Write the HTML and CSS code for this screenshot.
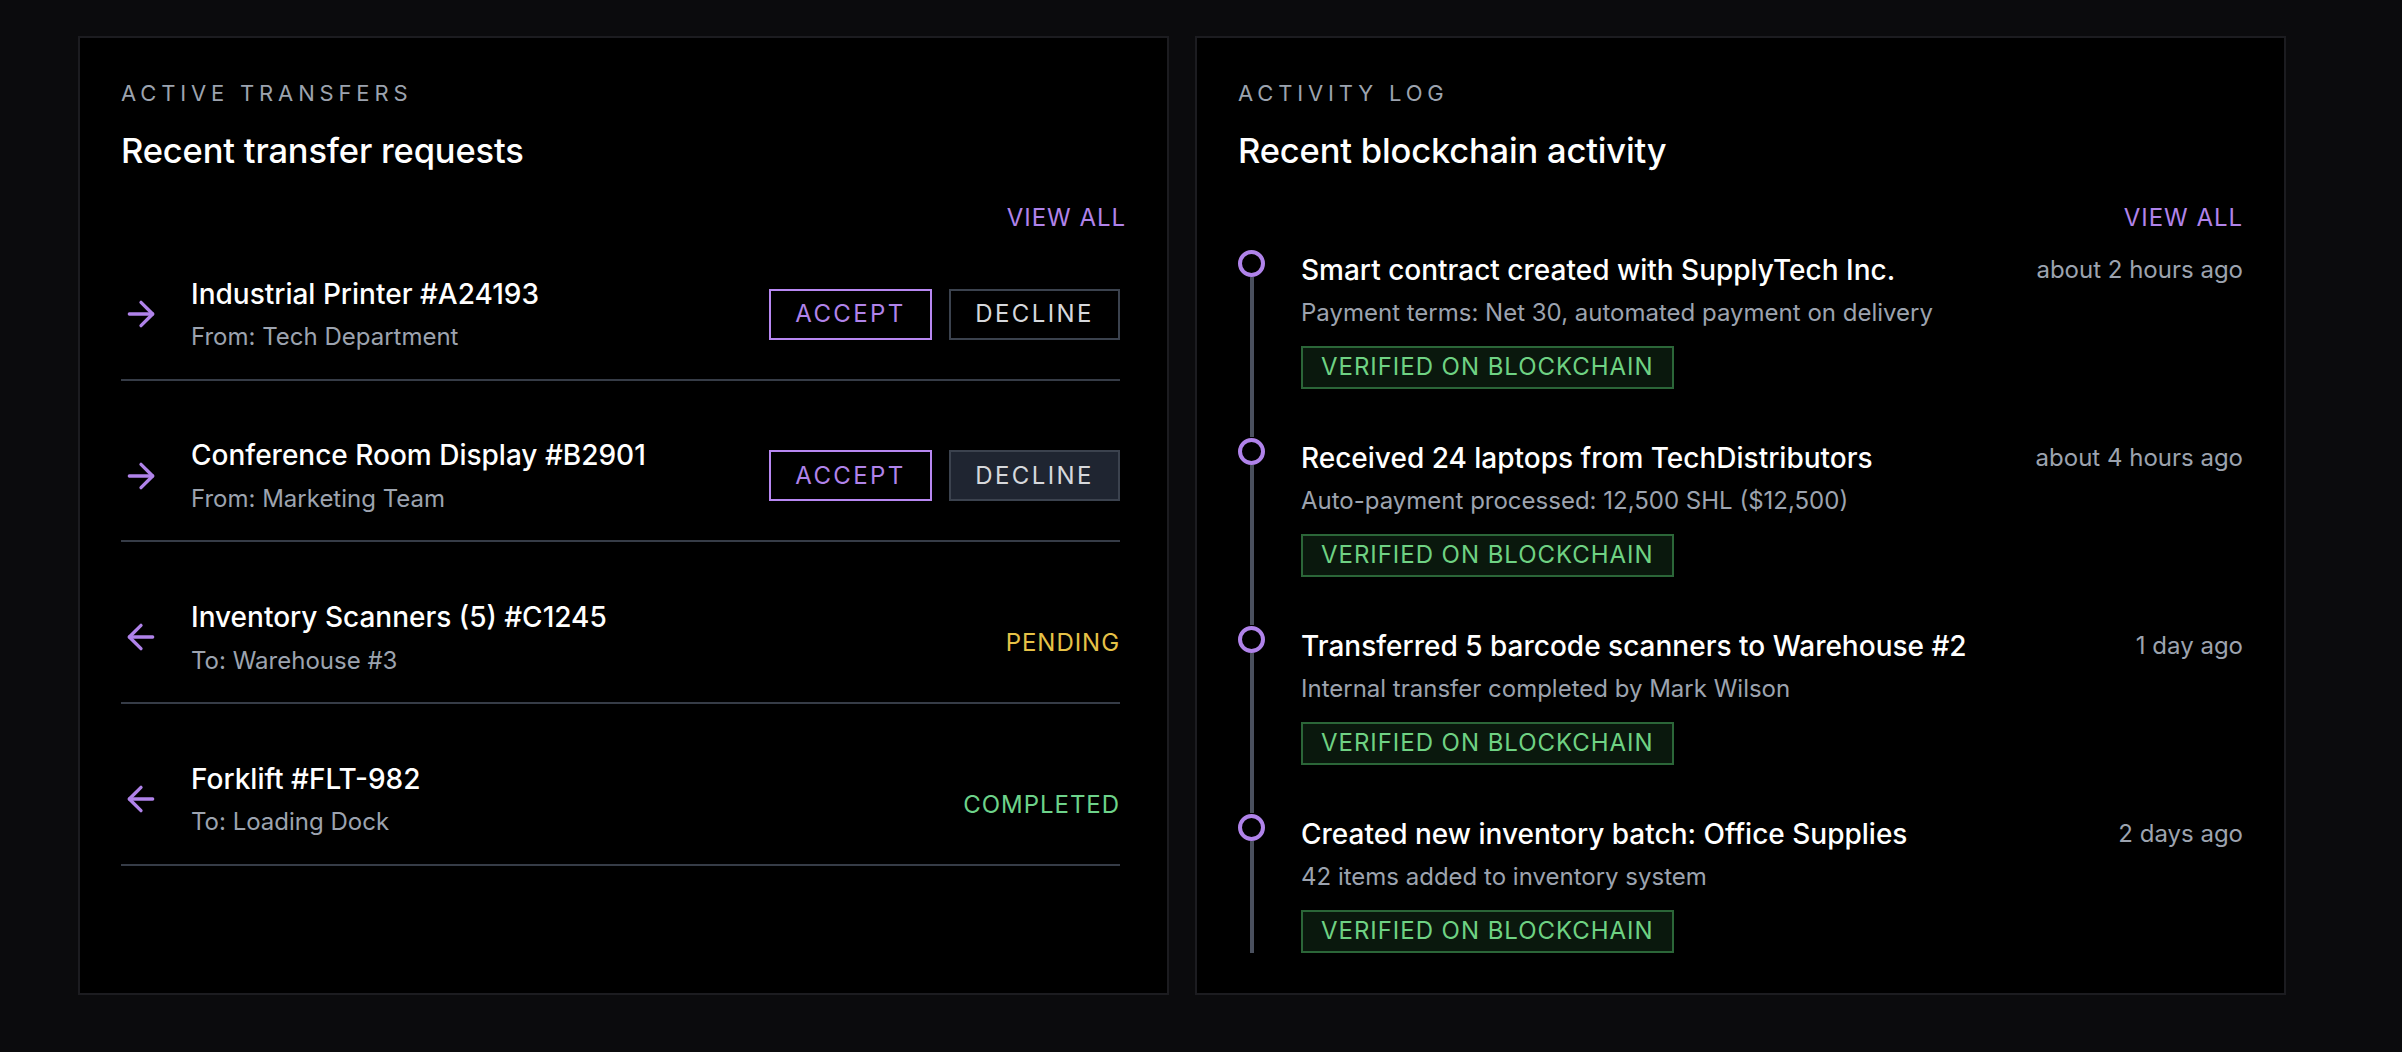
FILE: index.html
```html
<!DOCTYPE html>
<html lang="en">
<head>
<meta charset="utf-8">
<title>Transfers and Activity</title>
<link rel="stylesheet" href="styles.css">
</head>
<body>
<main class="page">
  <section class="card">
    <div class="label">Active Transfers</div>
    <h2 class="title">Recent transfer requests</h2>
    <div class="view-row"><a class="view-all">View All</a></div>
    <ul class="transfers">
      <li class="transfer">
        <svg class="dir" viewBox="0 0 24 24" fill="none" stroke="currentColor" stroke-width="2" stroke-linecap="round" stroke-linejoin="round"><path d="M5 12h14"/><path d="m12 5 7 7-7 7"/></svg>
        <div class="t-text">
          <div class="t-name">Industrial Printer #A24193</div>
          <div class="t-sub">From: Tech Department</div>
        </div>
        <div class="actions">
          <button class="btn btn-accept">Accept</button>
          <button class="btn btn-decline">Decline</button>
        </div>
      </li>
      <li class="transfer">
        <svg class="dir" viewBox="0 0 24 24" fill="none" stroke="currentColor" stroke-width="2" stroke-linecap="round" stroke-linejoin="round"><path d="M5 12h14"/><path d="m12 5 7 7-7 7"/></svg>
        <div class="t-text">
          <div class="t-name">Conference Room Display #B2901</div>
          <div class="t-sub">From: Marketing Team</div>
        </div>
        <div class="actions">
          <button class="btn btn-accept">Accept</button>
          <button class="btn btn-decline is-hover">Decline</button>
        </div>
      </li>
      <li class="transfer">
        <svg class="dir" viewBox="0 0 24 24" fill="none" stroke="currentColor" stroke-width="2" stroke-linecap="round" stroke-linejoin="round"><path d="m12 19-7-7 7-7"/><path d="M19 12H5"/></svg>
        <div class="t-text">
          <div class="t-name">Inventory Scanners (5) #C1245</div>
          <div class="t-sub">To: Warehouse #3</div>
        </div>
        <div class="status status-pending">Pending</div>
      </li>
      <li class="transfer">
        <svg class="dir" viewBox="0 0 24 24" fill="none" stroke="currentColor" stroke-width="2" stroke-linecap="round" stroke-linejoin="round"><path d="m12 19-7-7 7-7"/><path d="M19 12H5"/></svg>
        <div class="t-text">
          <div class="t-name">Forklift #FLT-982</div>
          <div class="t-sub">To: Loading Dock</div>
        </div>
        <div class="status status-done">Completed</div>
      </li>
    </ul>
  </section>

  <section class="card">
    <div class="label">Activity Log</div>
    <h2 class="title">Recent blockchain activity</h2>
    <div class="view-row"><a class="view-all">View All</a></div>
    <ol class="timeline">
      <li class="event">
        <div class="rail"><span class="dot"></span><span class="line"></span></div>
        <div class="e-body">
          <div class="e-head">
            <div class="e-name">Smart contract created with SupplyTech Inc.</div>
            <div class="e-time">about 2 hours ago</div>
          </div>
          <div class="e-sub">Payment terms: Net 30, automated payment on delivery</div>
          <span class="badge">Verified on Blockchain</span>
        </div>
      </li>
      <li class="event">
        <div class="rail"><span class="dot"></span><span class="line"></span></div>
        <div class="e-body">
          <div class="e-head">
            <div class="e-name">Received 24 laptops from TechDistributors</div>
            <div class="e-time">about 4 hours ago</div>
          </div>
          <div class="e-sub">Auto-payment processed: 12,500 SHL ($12,500)</div>
          <span class="badge">Verified on Blockchain</span>
        </div>
      </li>
      <li class="event">
        <div class="rail"><span class="dot"></span><span class="line"></span></div>
        <div class="e-body">
          <div class="e-head">
            <div class="e-name">Transferred 5 barcode scanners to Warehouse #2</div>
            <div class="e-time">1 day ago</div>
          </div>
          <div class="e-sub">Internal transfer completed by Mark Wilson</div>
          <span class="badge">Verified on Blockchain</span>
        </div>
      </li>
      <li class="event">
        <div class="rail"><span class="dot"></span><span class="line"></span></div>
        <div class="e-body">
          <div class="e-head">
            <div class="e-name">Created new inventory batch: Office Supplies</div>
            <div class="e-time">2 days ago</div>
          </div>
          <div class="e-sub">42 items added to inventory system</div>
          <span class="badge">Verified on Blockchain</span>
        </div>
      </li>
    </ol>
  </section>
</main>
</body>
</html>
```

FILE: styles.css
```css
* { box-sizing: border-box; }

html, body {
  margin: 0;
  padding: 0;
  background: #0b0b0d;
  font-family: Inter, "Noto Sans", "Liberation Sans", sans-serif;
  color: #f5f5f6;
}

.page {
  display: grid;
  grid-template-columns: 1091px 1091px;
  column-gap: 26px;
  padding: 36px 0 0 78px;
  align-items: stretch;
}

.card {
  background: #000;
  border: 2px solid #1c1c20;
  padding: 40px 41px 40px 41px;
}

.label {
  font-size: 22px;
  line-height: 31.5px;
  letter-spacing: 0.22em;
  text-transform: uppercase;
  color: #9ca3af;
}

.title {
  margin: 18.75px 0 0;
  font-size: 34.5px;
  line-height: 45px;
  font-weight: 500;
  color: #fff;
  letter-spacing: -0.005em;
}

.view-row {
  margin-top: 26.5px;
  display: flex;
  justify-content: flex-end;
}

.view-all {
  font-size: 24px;
  line-height: 36px;
  letter-spacing: 0.04em;
  text-transform: uppercase;
  color: #b083ea;
  cursor: pointer;
}

/* transfers list */
.transfers {
  list-style: none;
  margin: 12px 6px 0 0;
  padding: 0;
  display: flex;
  flex-direction: column;
  gap: 28.7px;
}

.transfer {
  display: flex;
  align-items: center;
  padding: 25px 0 23.5px;
  border-bottom: 2px solid #363c47;
}

.dir {
  width: 40px;
  height: 40px;
  color: #b083ea;
  flex: none;
  margin-right: 30px;
}

.t-text { flex: 1; min-width: 0; }

.t-name {
  font-size: 28px;
  line-height: 42px;
  font-weight: 500;
  color: #fff;
}

.t-sub {
  margin-top: 4.5px;
  font-size: 24px;
  line-height: 36px;
  color: #9ca3af;
}

.actions {
  display: flex;
  gap: 17px;
}

.btn {
  font-family: inherit;
  font-size: 24px;
  line-height: 36px;
  letter-spacing: 0.1em;
  text-transform: uppercase;
  background: transparent;
  border: 2px solid;
  padding: 5.5px 0;
  margin: 0;
  cursor: pointer;
}

.btn-accept {
  width: 163px;
  color: #b083ea;
  border-color: #b888f2;
}

.btn-decline {
  width: 171px;
  color: #d6d8dc;
  border-color: #3b424e;
}

.btn-decline.is-hover { background: #1f2531; }

.status {
  padding-top: 12px;
  font-size: 24px;
  line-height: 36px;
  letter-spacing: 0.04em;
  text-transform: uppercase;
}

.status-pending { color: #e6c247; }
.status-done { color: #6dd38a; }

/* timeline */
.timeline {
  list-style: none;
  margin: 13px 0 0;
  padding: 0;
}

.event {
  display: grid;
  grid-template-columns: 27px 1fr;
  column-gap: 36px;
}

.rail {
  display: flex;
  flex-direction: column;
  align-items: center;
  padding-top: 1px;
}

.dot {
  width: 27px;
  height: 27px;
  border: 4px solid #b083ea;
  border-radius: 50%;
  flex: none;
}

.line {
  flex: 1;
  width: 4px;
  background: #4a505e;
}

.e-body { padding-bottom: 47.8px; }
.event:last-child .e-body { padding-bottom: 0; }

.e-head {
  display: flex;
  justify-content: space-between;
  align-items: flex-start;
  gap: 24px;
}

.e-name {
  font-size: 28px;
  line-height: 42px;
  font-weight: 500;
  color: #fff;
}

.e-time {
  font-size: 24px;
  line-height: 36px;
  color: #9ca3af;
  white-space: nowrap;
  padding-top: 2.8px;
}

.e-sub {
  margin-top: 4.2px;
  font-size: 24px;
  line-height: 36px;
  color: #9ca3af;
}

.badge {
  display: inline-block;
  margin-top: 15px;
  padding: 3.5px 18px;
  font-size: 24px;
  line-height: 32px;
  letter-spacing: 0.04em;
  text-transform: uppercase;
  color: #6fd283;
  background: #0a180d;
  border: 2px solid #2b6638;
}
```
